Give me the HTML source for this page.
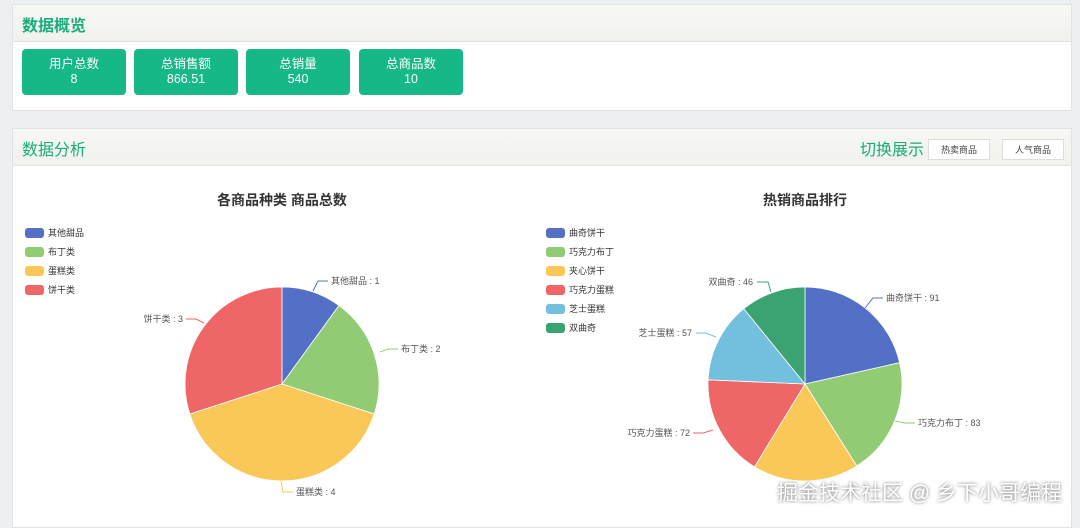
<!DOCTYPE html>
<html><head><meta charset="utf-8"><style>
body{margin:0;width:1080px;height:520px;background:#edeff1;font-family:"Liberation Sans","Noto Sans CJK SC",sans-serif;overflow:hidden;position:relative}
.p{position:absolute;left:12px;width:1060px;background:#fff;border:1px solid #dfe3e6;box-sizing:border-box}
.h{height:36px;background:linear-gradient(#f7f7f4,#f1f1ee);border-bottom:1px solid #e3e3e3;position:relative}
.h .t{position:absolute;left:9px;top:7px;font-size:16px;color:#1aac7c}
.c{position:absolute;top:44px;width:104px;height:46px;background:#16b887;border-radius:4px;color:#fff;text-align:center;font-size:12.5px;line-height:15px;padding-top:8px;box-sizing:border-box}
.b{position:absolute;top:10px;height:21px;width:62px;border:1px solid #ddd;background:#fff;font-size:9px;color:#444;text-align:center;line-height:20px;box-sizing:border-box}
svg text{font-family:"Liberation Sans","Noto Sans CJK SC",sans-serif}
.wm{position:absolute;right:18px;top:477px;font-size:21px;color:#fff;text-shadow:0 0 3px rgba(0,0,0,.6)}
</style></head><body>
<div class="p" style="top:4px;height:107px">
<div class="h"><span class="t" style="font-weight:bold">数据概览</span></div>
<div class="c" style="left:9px">用户总数<br>8</div>
<div class="c" style="left:121px">总销售额<br>866.51</div>
<div class="c" style="left:233px">总销量<br>540</div>
<div class="c" style="left:346px">总商品数<br>10</div>
</div>
<div class="p" style="top:128px;height:400px">
<div class="h"><span class="t">数据分析</span>
<span style="position:absolute;left:847px;top:7px;font-size:16px;color:#1aac7c">切换展示</span>
<div class="b" style="left:915px">热卖商品</div>
<div class="b" style="left:989px">人气商品</div>
</div>
</div>
<svg width="1080" height="520" style="position:absolute;left:0;top:0">
<text x="282" y="205" text-anchor="middle" font-size="14" font-weight="bold" fill="#333">各商品种类 商品总数</text>
<text x="805" y="205" text-anchor="middle" font-size="14" font-weight="bold" fill="#333">热销商品排行</text>
<g font-size="9" fill="#333">
<rect x="25" y="228" width="19" height="10" rx="3" fill="#5470c6"/><text x="48" y="236">其他甜品</text>
<rect x="25" y="247" width="19" height="10" rx="3" fill="#91cc75"/><text x="48" y="255">布丁类</text>
<rect x="25" y="266" width="19" height="10" rx="3" fill="#fac858"/><text x="48" y="274">蛋糕类</text>
<rect x="25" y="285" width="19" height="10" rx="3" fill="#ee6666"/><text x="48" y="293">饼干类</text>
<rect x="546" y="228" width="19" height="10" rx="3" fill="#5470c6"/><text x="569" y="236">曲奇饼干</text>
<rect x="546" y="247" width="19" height="10" rx="3" fill="#91cc75"/><text x="569" y="255">巧克力布丁</text>
<rect x="546" y="266" width="19" height="10" rx="3" fill="#fac858"/><text x="569" y="274">夹心饼干</text>
<rect x="546" y="285" width="19" height="10" rx="3" fill="#ee6666"/><text x="569" y="293">巧克力蛋糕</text>
<rect x="546" y="304" width="19" height="10" rx="3" fill="#73c0de"/><text x="569" y="312">芝士蛋糕</text>
<rect x="546" y="323" width="19" height="10" rx="3" fill="#3ba272"/><text x="569" y="331">双曲奇</text>
</g>
<g stroke="#fff" stroke-width="0.8">
<path d="M282 384L282 287A97 97 0 0 1 339 305.5Z" fill="#5470c6"/>
<path d="M282 384L339 305.5A97 97 0 0 1 374.2 414Z" fill="#91cc75"/>
<path d="M282 384L374.2 414A97 97 0 0 1 189.8 414Z" fill="#fac858"/>
<path d="M282 384L189.8 414A97 97 0 0 1 282 287Z" fill="#ee6666"/>
<path d="M805 384L805 287A97 97 0 0 1 899.6 362.7Z" fill="#5470c6"/>
<path d="M805 384L899.6 362.7A97 97 0 0 1 856.8 466Z" fill="#91cc75"/>
<path d="M805 384L856.8 466A97 97 0 0 1 754.5 466.8Z" fill="#fac858"/>
<path d="M805 384L754.5 466.8A97 97 0 0 1 708.1 379.8Z" fill="#ee6666"/>
<path d="M805 384L708.1 379.8A97 97 0 0 1 743.8 308.7Z" fill="#73c0de"/>
<path d="M805 384L743.8 308.7A97 97 0 0 1 805 287Z" fill="#3ba272"/>
</g>
<g fill="none" stroke-width="1">
<path d="M313 291L318 281H328" stroke="#5470c6"/>
<path d="M380 352L388 349H398" stroke="#91cc75"/>
<path d="M281 481L283 492H293" stroke="#fac858"/>
<path d="M204 323L196 319H186" stroke="#ee6666"/>
<path d="M865 308L873 298H883" stroke="#5470c6"/>
<path d="M895 421L905 423H915" stroke="#91cc75"/>
<path d="M713 430L703 433H693" stroke="#ee6666"/>
<path d="M716 337L706 333H696" stroke="#73c0de"/>
<path d="M771 292L768 282H757" stroke="#3ba272"/>
</g>
<g font-size="9" fill="#555">
<text x="331" y="284">其他甜品 : 1</text>
<text x="401" y="352">布丁类 : 2</text>
<text x="296" y="495">蛋糕类 : 4</text>
<text x="183" y="322" text-anchor="end">饼干类 : 3</text>
<text x="886" y="301">曲奇饼干 : 91</text>
<text x="918" y="426">巧克力布丁 : 83</text>
<text x="690" y="436" text-anchor="end">巧克力蛋糕 : 72</text>
<text x="692" y="336" text-anchor="end">芝士蛋糕 : 57</text>
<text x="753" y="285" text-anchor="end">双曲奇 : 46</text>
</g>
</svg>
<div class="wm">掘金技术社区 @ 乡下小哥编程</div>
</body></html>
